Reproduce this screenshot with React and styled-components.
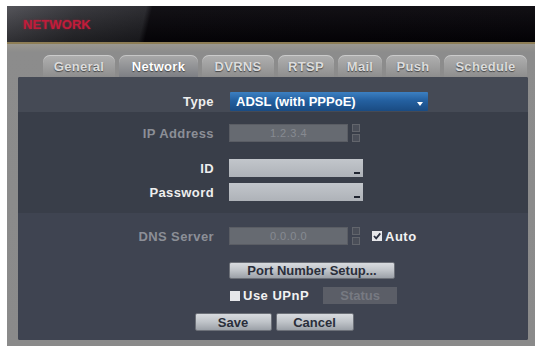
import React from 'react';
import styled, { createGlobalStyle } from 'styled-components';

const GlobalStyle = createGlobalStyle`
	html, body {
		margin: 0;
		padding: 0;
		background: #ffffff;
	}
	body {
		font-family: 'Liberation Sans', Arial, sans-serif;
	}
`;

const tabs = [
	{ name: 'General', width: 72 },
	{ name: 'Network', width: 79, active: true },
	{ name: 'DVRNS', width: 72 },
	{ name: 'RTSP', width: 56 },
	{ name: 'Mail', width: 44 },
	{ name: 'Push', width: 54 },
	{ name: 'Schedule', width: 83 },
];

const CheckMark = () => (
	<svg width="10" height="10" viewBox="0 0 10 10">
		<path d="M2 5 L4.2 7.4 L8.3 2.4" fill="none" stroke="#2a3040" strokeWidth="1.8" />
	</svg>
);

const App = () => {
	return (
		<>
			<GlobalStyle />
			<Window>
				<TitleBar>
					<Title>NETWORK</Title>
				</TitleBar>
				<Body>
					<TabRow>
						{tabs.map(tab => (
							<Tab key={tab.name} $width={tab.width} $active={tab.active}>
								{tab.name}
							</Tab>
						))}
					</TabRow>
					<Panel>
						<Section $tone="#454a55" $pad="15px 0 1px">
							<Row>
								<Label>Type</Label>
								<Select>
									ADSL (with PPPoE)
									<Arrow />
								</Select>
							</Row>
						</Section>

						<Section $tone="#393e49" $pad="12px 0 12px">
							<Row>
								<Label $dim>IP Address</Label>
								<DimField>1.2.3.4</DimField>
								<Spinner>
									<SpinBox />
									<SpinBox />
								</Spinner>
							</Row>
							<Row $top={17}>
								<Label>ID</Label>
								<TextField>
									<Cursor />
								</TextField>
							</Row>
							<Row $top={6}>
								<Label>Password</Label>
								<TextField>
									<Cursor />
								</TextField>
							</Row>
						</Section>

						<Section $tone="#3f4451" $pad="14px 0 7px" $grow>
							<Row>
								<Label $dim>DNS Server</Label>
								<DimField>0.0.0.0</DimField>
								<Spinner>
									<SpinBox />
									<SpinBox />
								</Spinner>
								<Check $left={12}>
									<CheckMark />
								</Check>
								<CheckText>Auto</CheckText>
							</Row>
							<Row $top={17}>
								<Label />
								<Button $width={166} $height={17}>
									Port Number Setup...
								</Button>
							</Row>
							<Row $top={8}>
								<Label />
								<Check $left={1} />
								<CheckText>Use UPnP</CheckText>
								<DisabledButton>Status</DisabledButton>
							</Row>
							<ButtonRow>
								<Button $width={77} $height={18}>
									Save
								</Button>
								<Button $width={78} $height={18}>
									Cancel
								</Button>
							</ButtonRow>
						</Section>
					</Panel>
				</Body>
			</Window>
		</>
	);
};

export default App;

const Window = styled.div`
	width: 528px;
	height: 340px;
	margin: 6px 0 0 7px;
	display: flex;
	flex-direction: column;
	background: #8b8b8b;
	box-shadow: inset 3px 0 0 #9c9c9c, inset -2px 0 0 #9a9a9a;
`;

const TitleBar = styled.div`
	height: 36px;
	flex-shrink: 0;
	display: flex;
	align-items: center;
	padding-left: 16px;
	background:
		linear-gradient(180deg, rgba(255, 255, 255, 0.05) 0%, rgba(0, 0, 0, 0.35) 100%),
		linear-gradient(103deg, #4c4c52 0px, #303035 70px, #242429 136px, #07050a 142px, #050308 100%);
	border-bottom: 2px solid #8d7d55;
`;

const Title = styled.span`
	color: #c01c3a;
	font-size: 13px;
	font-weight: bold;
	letter-spacing: 0.1px;
	text-shadow: 0 0 2px rgba(200, 30, 60, 0.6);
`;

const Body = styled.div`
	flex: 1;
	display: flex;
	flex-direction: column;
	padding: 11px 7px 6px 11px;
	background: linear-gradient(180deg, #9a9790 0px, #8c8c8c 8px, #8a8a8a 100%);
`;

const TabRow = styled.div`
	display: flex;
	gap: 4px;
	padding-left: 25px;
	height: 22px;
`;

const Tab = styled.div`
	width: ${({ $width }) => $width}px;
	height: 22px;
	display: flex;
	align-items: center;
	justify-content: center;
	border-radius: 7px 7px 0 0;
	background: ${({ $active }) =>
		$active
			? 'linear-gradient(180deg, #a9a9a9 0%, #7d7f84 100%)'
			: 'linear-gradient(180deg, #b0b0b0 0%, #8e8e8e 100%)'};
	color: ${({ $active }) => ($active ? '#ffffff' : '#dcdcdc')};
	font-size: 13px;
	font-weight: bold;
	letter-spacing: 0.3px;
	text-shadow: 0 1px 1px rgba(0, 0, 0, 0.55);
	box-shadow: inset 0 1px 0 rgba(255, 255, 255, 0.35);
`;

const Panel = styled.div`
	flex: 1;
	display: flex;
	flex-direction: column;
	border-radius: 2px;
	overflow: hidden;
	background: #3d424e;
`;

const Section = styled.div`
	padding: ${({ $pad }) => $pad};
	background: ${({ $tone }) => $tone};
	flex: ${({ $grow }) => ($grow ? 1 : 'none')};
	display: flex;
	flex-direction: column;
`;

const Row = styled.div`
	display: flex;
	align-items: center;
	margin-top: ${({ $top }) => $top || 0}px;
`;

const Label = styled.div`
	width: 196px;
	margin-right: 15px;
	text-align: right;
	font-size: 13px;
	font-weight: bold;
	letter-spacing: 0.4px;
	color: ${({ $dim }) => ($dim ? '#8c8f97' : '#eeeeee')};
	flex-shrink: 0;
`;

const Select = styled.div`
	width: 198px;
	height: 19px;
	margin-left: 1px;
	display: flex;
	align-items: center;
	padding-left: 6px;
	box-sizing: border-box;
	background: linear-gradient(180deg, #3c80c2 0%, #2460a0 45%, #1a4b82 100%);
	color: #ffffff;
	font-size: 13px;
	font-weight: bold;
	border-radius: 1px;
`;

const Arrow = styled.span`
	margin-left: auto;
	margin-right: 5px;
	margin-top: 4px;
	width: 0;
	height: 0;
	border-left: 3px solid transparent;
	border-right: 3px solid transparent;
	border-top: 4px solid #ffffff;
`;

const DimField = styled.div`
	width: 119px;
	height: 18px;
	display: flex;
	align-items: center;
	justify-content: center;
	background: #666a71;
	border: 1px solid #5a5d64;
	box-sizing: border-box;
	color: #878a91;
	font-size: 11px;
	letter-spacing: 0.5px;
`;

const Spinner = styled.div`
	margin-left: 4px;
	display: flex;
	flex-direction: column;
	gap: 2px;
`;

const SpinBox = styled.div`
	width: 8px;
	height: 8px;
	box-sizing: border-box;
	border: 1px solid #62656c;
	background: #4a4e58;
`;

const TextField = styled.div`
	width: 134px;
	height: 18px;
	display: flex;
	align-items: flex-end;
	justify-content: flex-end;
	padding: 0 3px 3px 0;
	box-sizing: border-box;
	background: linear-gradient(180deg, #c2c6cb 0%, #aeb2b8 100%);
`;

const Cursor = styled.span`
	width: 6px;
	height: 2px;
	background: #202530;
`;

const Check = styled.div`
	width: 10px;
	height: 10px;
	margin-left: ${({ $left }) => $left}px;
	display: flex;
	background: #e6e7ea;
	flex-shrink: 0;
`;

const CheckText = styled.span`
	margin-left: 3px;
	color: #f2f2f2;
	font-size: 13px;
	font-weight: bold;
	letter-spacing: 0.5px;
`;

const Button = styled.div`
	width: ${({ $width }) => $width}px;
	height: ${({ $height }) => $height}px;
	display: flex;
	align-items: center;
	justify-content: center;
	box-sizing: border-box;
	border: 1px solid #6c7078;
	border-radius: 2px;
	background: linear-gradient(180deg, #d8dbdf 0%, #bfc3c8 50%, #9ca1a8 100%);
	color: #2a2e3a;
	font-size: 13px;
	font-weight: bold;
`;

const DisabledButton = styled.div`
	width: 74px;
	height: 17px;
	margin-left: 14px;
	display: flex;
	align-items: center;
	justify-content: center;
	background: #5b5e67;
	color: #777a82;
	font-size: 13px;
	font-weight: bold;
`;

const ButtonRow = styled.div`
	display: flex;
	justify-content: center;
	gap: 4px;
	margin-top: 9px;
	padding-left: 2px;
`;
